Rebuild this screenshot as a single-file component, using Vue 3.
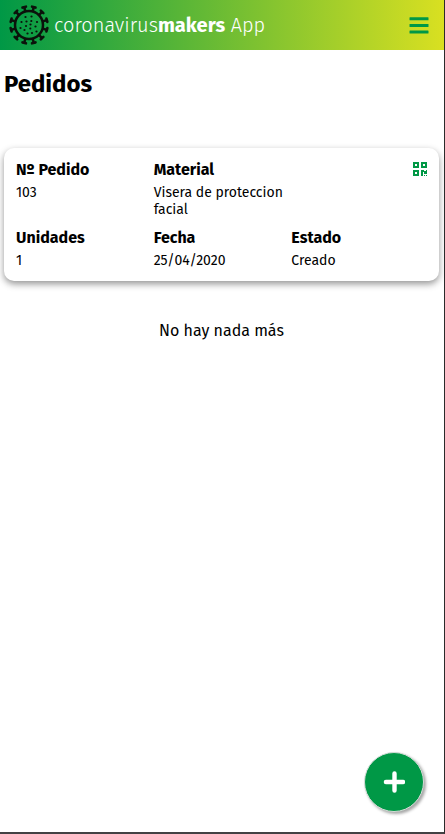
<template>
  <div class="app">

    <header class="navbar">
      <div class="brand">
        <svg class="brand-logo" width="40" height="40" viewBox="-20 -20 40 40">
          <circle r="14" fill="none" stroke="#0b120b" stroke-width="2.5" />
          <g v-for="n in 12" :key="n" :transform="`rotate(${n * 30 + 15})`">
            <path d="M0 -14 V-18.2" stroke="#0b120b" stroke-width="2.5" />
            <path d="M-1.8 -18.5 H1.8" stroke="#0b120b" stroke-width="2.6" stroke-linecap="round" />
          </g>
          <circle
            v-for="([x, y], i) in spots"
            :key="i"
            :cx="x" :cy="y" r="1.1"
            fill="#0b120b"
          />
        </svg>
        <span class="brand-name">coronavirus<b>makers</b> App</span>
      </div>

      <button class="menu-btn" aria-label="Menu">
        <svg width="20" height="18" viewBox="0 0 20 18" fill="#009846">
          <rect x="0.5" y="1.3" width="19" height="3" rx="0.5" />
          <rect x="0.5" y="8" width="19" height="3" rx="0.5" />
          <rect x="0.5" y="14.4" width="19" height="3" rx="0.5" />
        </svg>
      </button>
    </header>

    <main class="content">
      <h1 class="title">Pedidos</h1>

      <article v-for="order in orders" :key="order.id" class="card">
        <div class="field">
          <div class="label">Nº Pedido</div>
          <div class="value">{{ order.id }}</div>
        </div>
        <div class="field">
          <div class="label">Material</div>
          <div class="value">{{ order.material }}</div>
        </div>
        <div class="qr">
          <svg width="14" height="14" viewBox="0 0 14 14" fill="#009846">
            <path fill-rule="evenodd" d="M0 0H6V6H0Z M2 2V4H4V2Z M8 0H14V6H8Z M10 2V4H12V2Z M0 8H6V14H0Z M2 10V12H4V10Z" />
            <path d="M8 8H11V9H13V8H14V12H11V10H10V14H8Z M11 13H12V14H11Z M13 13H14V14H13Z" />
          </svg>
        </div>
        <div class="field">
          <div class="label">Unidades</div>
          <div class="value">{{ order.units }}</div>
        </div>
        <div class="field">
          <div class="label">Fecha</div>
          <div class="value">{{ order.date }}</div>
        </div>
        <div class="field">
          <div class="label">Estado</div>
          <div class="value">{{ order.status }}</div>
        </div>
      </article>

      <p class="end-msg">No hay nada más</p>
    </main>

    <button class="fab" aria-label="Nuevo pedido">
      <svg width="22" height="22" viewBox="0 0 22 22">
        <path d="M11.5 2.4V19.6M2.9 11H20.1" stroke="#fff" stroke-width="4.4" stroke-linecap="round" />
      </svg>
    </button>

  </div>
</template>

<script setup>
import { ref } from 'vue'

const orders = ref([
  {
    id: 103,
    material: 'Visera de proteccion facial',
    units: 1,
    date: '25/04/2020',
    status: 'Creado',
  },
])

// dots inside the virus logo
const spots = [
  [-3.5, -8], [2.5, -8.5], [-7.5, -3], [-2.5, -3.5], [2.3, -4], [8, -3],
  [-3, 1], [1.5, -0.5], [-8.5, 3], [6.5, 1.5],
  [-4.5, 5], [1.3, 3.5], [7.5, 6.5], [-1.5, 8.5], [3, 8],
]
</script>

<style>
body {
  margin: 0;
  background: #fff;
}
</style>

<style scoped>
.app {
  position: relative;
  box-sizing: border-box;
  height: 834px;
  border-right: 1px solid #2b2b2b;
  border-bottom: 2px solid #424143;
  overflow: hidden;
  background: #fff;
  color: #000;
  font-family: 'Fira Sans', 'Noto Sans', sans-serif;
}

.navbar {
  display: flex;
  align-items: center;
  justify-content: space-between;
  box-sizing: border-box;
  height: 50px;
  padding: 0 15px 0 9px;
  background: linear-gradient(to right, #009846, #d9e021);
}

.brand {
  display: flex;
  align-items: center;
  gap: 5px;
}

.brand-name {
  color: #fff;
  font-size: 20px;
  font-weight: 300;
  line-height: 24px;
  white-space: nowrap;
}

.brand-name b {
  font-weight: 700;
}

.menu-btn {
  display: flex;
  padding: 0;
  border: 0;
  background: none;
}

.content {
  padding: 0 5px 0 4px;
}

.title {
  margin: 19px 0 49px;
  font-size: 24px;
  font-weight: 700;
  line-height: 30px;
}

.card {
  display: grid;
  grid-template-columns: repeat(3, 1fr);
  row-gap: 10px;
  align-content: start;
  box-sizing: border-box;
  height: 133px;
  padding: 12px 10px 10px 12px;
  border-radius: 10px;
  background: #fff;
  box-shadow: 0 3px 7px rgba(0, 0, 0, 0.42);
}

.label {
  font-size: 16px;
  font-weight: 700;
  line-height: 20px;
}

.value {
  margin-top: 4px;
  font-size: 14px;
  line-height: 17px;
}

.qr {
  display: flex;
  justify-content: flex-end;
  padding: 2px 2px 0 0;
}

.end-msg {
  margin: 40px 0 0;
  font-size: 16px;
  line-height: 20px;
  text-align: center;
}

.fab {
  position: absolute;
  right: 20px;
  bottom: 20px;
  display: flex;
  align-items: center;
  justify-content: center;
  width: 60px;
  height: 60px;
  padding: 0;
  border: 1px solid #d5ddd8;
  border-radius: 50%;
  background: #009846;
  box-shadow: 2px 2px 3px rgba(0, 0, 0, 0.35);
}
</style>
